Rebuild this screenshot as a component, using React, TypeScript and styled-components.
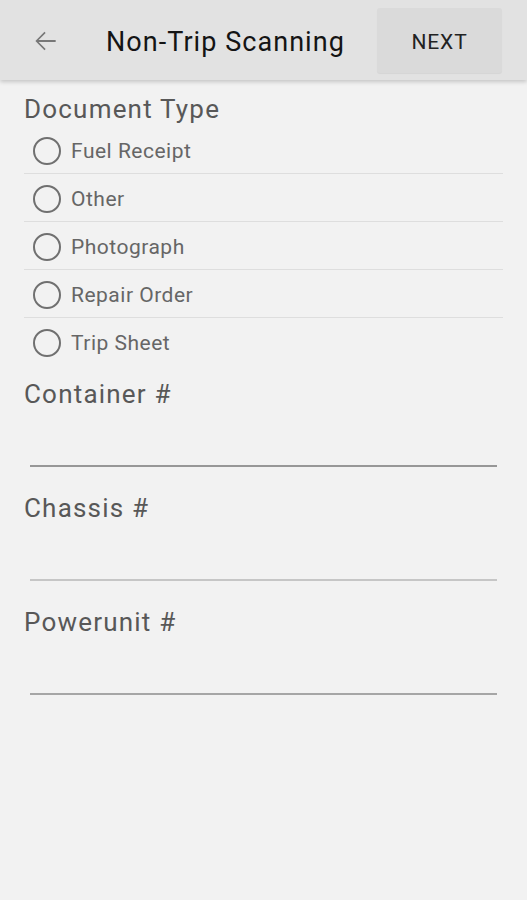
import React from 'react';
import styled, { createGlobalStyle } from 'styled-components';

const GlobalStyle = createGlobalStyle`
  html, body {
    margin: 0;
    padding: 0;
    background: #f2f2f2;
    font-family: Roboto, "Noto Sans", "Liberation Sans", sans-serif;
  }
`;

const Screen = styled.div`
  width: 527px;
  min-height: 900px;
  background: #f2f2f2;
`;

const Toolbar = styled.header`
  height: 80px;
  background: #e2e2e2;
  display: flex;
  align-items: center;
  padding-left: 29px;
  box-shadow: 0 2px 4px rgba(0, 0, 0, 0.18);
  position: relative;
`;

const BackButton = styled.div`
  width: 32px;
  height: 32px;
  margin-top: 2px;
  display: flex;
  align-items: center;
  justify-content: center;
`;

const Title = styled.h1`
  margin: 3px 0 0 45px;
  font-size: 27px;
  font-weight: 400;
  color: #141414;
  letter-spacing: 1.05px;
`;

const NextButton = styled.button`
  margin-left: auto;
  margin-right: 25px;
  align-self: flex-start;
  margin-top: 8px;
  width: 125px;
  height: 65px;
  padding-top: 3px;
  border: none;
  border-radius: 3px;
  background: #dadada;
  box-shadow: 0 1px 1px rgba(0, 0, 0, 0.06);
  font-family: inherit;
  font-size: 21px;
  color: #222;
  letter-spacing: 0.9px;
`;

const Content = styled.main`
  padding: 0 24px;
`;

const SectionLabel = styled.div`
  font-size: 26px;
  line-height: 36px;
  color: #585858;
  letter-spacing: 1.2px;
`;

const DocTypeLabel = styled(SectionLabel)`
  padding-top: 13px;
  line-height: 33px;
`;

const RadioList = styled.div`
  display: flex;
  flex-direction: column;
`;

const RadioRow = styled.label<{ $last?: boolean }>`
  height: 47px;
  display: flex;
  align-items: center;
  gap: 10px;
  padding-left: 9px;
  border-bottom: ${(p) => (p.$last ? 'none' : '1px solid #dedede')};
`;

const Circle = styled.span`
  width: 24px;
  height: 24px;
  border: 2px solid #707070;
  border-radius: 50%;
  margin-top: 2px;
`;

const RadioText = styled.span`
  font-size: 21px;
  color: #666;
  margin-top: 3px;
  letter-spacing: 0.5px;
`;

const Spacer = styled.div`
  height: 9px;
`;

const Field = styled.div`
  margin-bottom: 21px;
`;

const FieldLabel = styled(SectionLabel)`
  padding-top: 2px;
`;

const Underline = styled.div<{ $tone: string }>`
  height: 55px;
  margin: 0 6px;
  border-bottom: 2px solid ${(p) => p.$tone};
  box-sizing: border-box;
`;

const docTypes = ['Fuel Receipt', 'Other', 'Photograph', 'Repair Order', 'Trip Sheet'];

const fields = [
  { label: 'Container #', tone: '#979797' },
  { label: 'Chassis #', tone: '#c6c6c6' },
  { label: 'Powerunit #', tone: '#a6a6a6' },
];

export default function App() {
  return (
    <Screen>
      <GlobalStyle />
      <Toolbar>
        <BackButton>
          <svg width="32" height="32" viewBox="0 0 24 24">
            <path
              d="M20 11.25H7.2l5.3-5.3-.9-.9L4.8 12l6.8 6.95.9-.9-5.3-5.3H20z"
              fill="#777"
            />
          </svg>
        </BackButton>
        <Title>Non-Trip Scanning</Title>
        <NextButton>NEXT</NextButton>
      </Toolbar>
      <Content>
        <DocTypeLabel>Document Type</DocTypeLabel>
        <RadioList>
          {docTypes.map((t, i) => (
            <RadioRow key={t} $last={i === docTypes.length - 1}>
              <Circle />
              <RadioText>{t}</RadioText>
            </RadioRow>
          ))}
        </RadioList>
        <Spacer />
        {fields.map((f) => (
          <Field key={f.label}>
            <FieldLabel>{f.label}</FieldLabel>
            <Underline $tone={f.tone} />
          </Field>
        ))}
      </Content>
    </Screen>
  );
}
